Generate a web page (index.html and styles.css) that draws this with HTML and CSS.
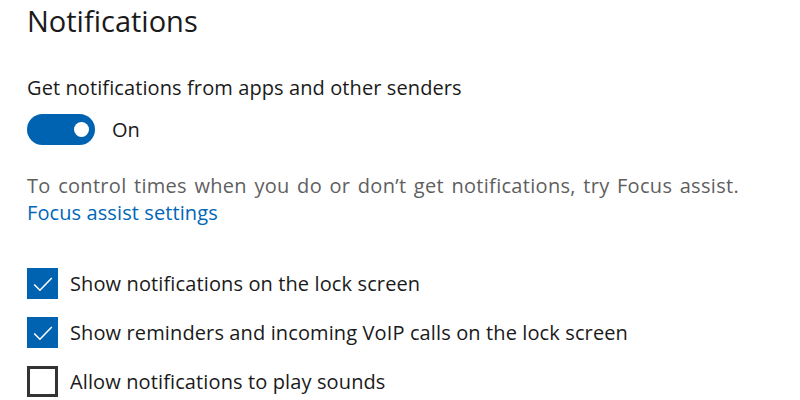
FILE: index.html
```html
<!DOCTYPE html>
<html lang="en">
<head>
    <meta charset="UTF-8">
    <meta name="viewport" content="width=device-width, initial-scale=1.0">
    <title>Notifications</title>
    <link rel="stylesheet" href="styles.css">
</head>
<body>
    <div id="settings">
        <h1>Notifications</h1>

        <!-- Main toggle -->
        <p class="label">Get notifications from apps and other senders</p>
        <div class="toggle-row">
            <span class="toggle on"><span class="knob"></span></span>
            <span class="toggle-text">On</span>
        </div>

        <!-- Focus assist hint -->
        <p class="hint">To control times when you do or don’t get notifications, try Focus assist.</p>
        <a class="link" href="#">Focus assist settings</a>

        <!-- Checkboxes -->
        <div class="checks">
            <label class="check">
                <span class="box checked">
                    <svg viewBox="0 0 20 20" width="22" height="22"><path d="M2 10.5 L7.2 15.7 L18 4.5" fill="none" stroke="#fff" stroke-width="1.4"/></svg>
                </span>
                <span>Show notifications on the lock screen</span>
            </label>
            <label class="check">
                <span class="box checked">
                    <svg viewBox="0 0 20 20" width="22" height="22"><path d="M2 10.5 L7.2 15.7 L18 4.5" fill="none" stroke="#fff" stroke-width="1.4"/></svg>
                </span>
                <span>Show reminders and incoming VoIP calls on the lock screen</span>
            </label>
            <label class="check">
                <span class="box"></span>
                <span>Allow notifications to play sounds</span>
            </label>
        </div>
    </div>
</body>
</html>
```

FILE: styles.css
```css
body {
    margin: 0;
    background-color: #ffffff;
    font-family: "Open Sans", "Noto Sans", Arial, sans-serif;
    color: #000000;
}
#settings {
    padding: 3px 0 0 27px;
}
h1 {
    margin: 0;
    font-size: 29px;
    font-weight: 400;
    line-height: 36px;
    color: #1a1a1a;
}
.label {
    margin: 36px 0 0 0;
    font-size: 20px;
    line-height: 26px;
    letter-spacing: 0.1px;
    color: #1a1a1a;
}
.toggle-row {
    display: flex;
    align-items: center;
    gap: 17px;
    margin-top: 13px;
}
.toggle {
    display: flex;
    align-items: center;
    justify-content: flex-end;
    box-sizing: border-box;
    width: 68px;
    height: 31px;
    padding-right: 6px;
    border-radius: 16px;
    background-color: #0063b1;
}
.knob {
    width: 15px;
    height: 15px;
    border-radius: 50%;
    background-color: #ffffff;
}
.toggle-text {
    font-size: 20px;
    color: #1a1a1a;
}
.hint {
    margin: 27px 0 0 0;
    font-size: 20px;
    line-height: 27px;
    word-spacing: 2px;
    letter-spacing: 0.3px;
    color: #5f5f5f;
}
.link {
    display: block;
    font-size: 20px;
    line-height: 27px;
    letter-spacing: 0.1px;
    color: #0067b8;
    text-decoration: none;
}
.checks {
    display: flex;
    flex-direction: column;
    gap: 18px;
    margin-top: 42px;
}
.check {
    display: flex;
    align-items: center;
    gap: 12px;
    font-size: 20px;
    line-height: 31px;
    letter-spacing: 0.12px;
    color: #1a1a1a;
}
.box {
    display: flex;
    align-items: center;
    justify-content: center;
    box-sizing: border-box;
    width: 31px;
    height: 31px;
    border: 3px solid #333333;
    background-color: #ffffff;
}
.box.checked {
    border: none;
    background-color: #0063b1;
}
```
